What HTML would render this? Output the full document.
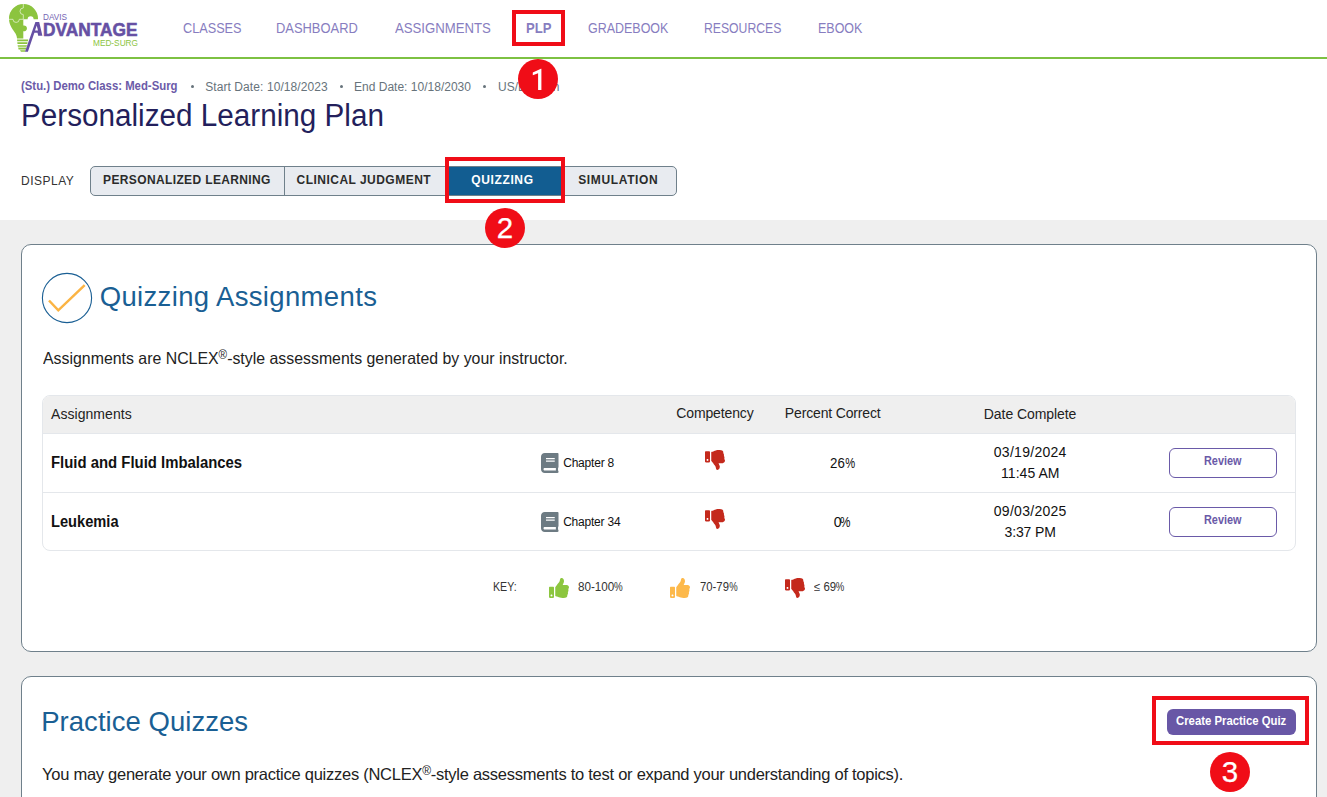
<!DOCTYPE html>
<html><head><meta charset="utf-8">
<style>
*{margin:0;padding:0;box-sizing:border-box}
html,body{width:1327px;height:797px;overflow:hidden;background:#fff;font-family:"Liberation Sans",sans-serif}
.a{position:absolute;white-space:nowrap}
.t{position:absolute;white-space:nowrap;line-height:1}
.redbox{position:absolute;border:4px solid #f00d17}
.badge{position:absolute;width:40px;height:40px;border-radius:50%;background:#f00d17;color:#fff;font-size:29.5px;line-height:40px;text-align:center;-webkit-text-stroke:0.25px #fff}
.card{position:absolute;left:21px;width:1296px;background:#fff;border:1px solid #6f808b;border-radius:10px}
sup{font-size:12px;line-height:0;vertical-align:5px}
.pc{font-style:normal;display:inline-block;transform:scaleX(0.84);transform-origin:0 0}
</style></head><body>
<div class="a" style="left:0;top:0;width:1327px;height:59px;background:#fff;border-bottom:2px solid #7dc142"></div>
<svg class="a" style="left:0;top:0" width="150" height="56" viewBox="0 0 150 56">
<g fill="#8cc43f">
<path d="M23.3,4 A14.5,14.5 0 0 0 9,18.5 C9,26 13.5,30 15.5,33.5 C16.6,35.5 17,37 17,38.6 L23.3,38.6 L23.3,31.2 A2.9,2.9 0 1 0 23.3,25.6 L23.3,19.3 L27.6,19.3 A3,3 0 1 1 33.6,19.3 L37.9,19.3 C38,18.9 38,18.7 38,18.5 A14.5,14.5 0 0 0 23.3,4 Z"/>
<path d="M17,39.5 L28.2,39.5 L27.9,41.2 L17.2,41.2 Z"/>
<path d="M17.3,42.2 L27.6,42.2 L27.3,43.9 L17.5,43.9 Z"/>
<path d="M17.6,44.9 L27,44.9 L26.4,47.2 L18,47.2 Z" fill="#a9d46e"/>
<path d="M18.2,47.8 L26.2,47.8 L25.8,49.5 L18.6,49.5 Z"/>
<path d="M20,50.2 L25.6,50.2 L25.2,51.8 L21,51.8 Z"/>
</g>
<g fill="none" stroke="#fff" stroke-width="0.7" opacity="0.85">
<path d="M23.3,4 L23.3,8 A3.3,3.3 0 0 0 23.3,14.6 L23.3,19.3"/>
<path d="M9,19.3 L13,19.3 A3.1,3.1 0 0 0 19.3,19.3 L23.3,19.3"/>
</g>
<path fill="#6650a4" d="M35.4,22 L39.2,22 L42.4,35.7 L38.2,35.7 L37.5,32.8 L34.4,32.8 L27.9,51.8 L25,51.8 Z"/>
<path fill="#fff" d="M36.7,25.4 L38,30.6 L35,30.6 Z"/>
<text x="43" y="35.7" font-family="Liberation Sans" font-weight="bold" font-size="19.2" fill="#6650a4" stroke="#6650a4" stroke-width="0.6" textLength="94.5" lengthAdjust="spacingAndGlyphs">DVANTAGE</text>
<text x="43" y="19.9" font-family="Liberation Sans" font-size="9.5" fill="#7565b3" textLength="24" lengthAdjust="spacingAndGlyphs">DAVIS</text>
<text x="93" y="46.1" font-family="Liberation Sans" font-size="9.8" fill="#8cc43f" textLength="45" lengthAdjust="spacingAndGlyphs">MED-SURG</text>
</svg>

<div class="a" style="left:190.5px;top:84.5px;width:3px;height:3px;border-radius:50%;background:#67737b"></div>
<div class="a" style="left:339.5px;top:84.5px;width:3px;height:3px;border-radius:50%;background:#67737b"></div>
<div class="a" style="left:483px;top:84.5px;width:3px;height:3px;border-radius:50%;background:#67737b"></div>
<div class="a" style="left:0;top:220px;width:1327px;height:577px;background:#efefef"></div>
<div class="a" style="left:90px;top:166px;width:587px;height:30px;border:1px solid #6f808b;border-radius:5px;background:#e8ebf0;overflow:hidden"><div class="a" style="left:193px;top:0;width:1px;height:28px;background:#6f808b"></div><div class="a" style="left:354px;top:0;width:119px;height:28px;background:#125d91"></div></div>
<div class="card" style="top:244px;height:408px"></div>
<div class="card" style="top:676px;height:200px"></div>
<svg class="a" style="left:41px;top:272px" width="52" height="52" viewBox="0 0 52 52"><circle cx="26" cy="26" r="24.6" fill="none" stroke="#1a5f94" stroke-width="1.1"/><polyline points="8,28.5 17.3,38.3 43.7,13.2" fill="none" stroke="#fbb444" stroke-width="2.5"/></svg>
<div class="a" style="left:42px;top:395px;width:1254px;height:156px;border:1px solid #e4e7eb;border-radius:8px;overflow:hidden"><div class="a" style="left:0;top:0;width:100%;height:38px;background:#efefef;border-bottom:1px solid #e4e7eb"></div><div class="a" style="left:0;top:96px;width:100%;height:1px;background:#e4e7eb"></div></div>
<svg class="a" style="left:541px;top:453px" width="17.5" height="20" viewBox="0 0 448 512" fill="#6d7b83"><path d="M448 360V24c0-13.3-10.7-24-24-24H96C43 0 0 43 0 96v320c0 53 43 96 96 96h328c13.3 0 24-10.7 24-24v-16c0-7.5-3.5-14.3-8.9-18.7-4.2-15.4-4.2-59.3 0-74.7 5.4-4.3 8.9-11.1 8.9-18.6zM128 134c0-3.3 2.7-6 6-6h212c3.3 0 6 2.7 6 6v20c0 3.3-2.7 6-6 6H134c-3.3 0-6-2.7-6-6v-20zm0 64c0-3.3 2.7-6 6-6h212c3.3 0 6 2.7 6 6v20c0 3.3-2.7 6-6 6H134c-3.3 0-6-2.7-6-6v-20zm253.4 250H96c-17.7 0-32-14.3-32-32 0-17.6 14.4-32 32-32h285.4c-1.9 17.1-1.9 46.9 0 64z"/></svg>
<svg class="a" style="left:705px;top:450px" width="20" height="20" viewBox="0 0 512 512" fill="#c4291c"><path d="M0 56v240c0 13.255 10.745 24 24 24h80c13.255 0 24-10.745 24-24V56c0-13.255-10.745-24-24-24H24C10.745 32 0 42.745 0 56zm40 200c0-13.255 10.745-24 24-24s24 10.745 24 24-10.745 24-24 24-24-10.745-24-24zm272 256c-20.183 0-29.485-39.293-33.931-57.795-5.206-21.666-10.589-44.07-25.393-58.902-32.469-32.524-49.503-73.967-89.117-113.111a11.98 11.98 0 0 1-3.558-8.521V59.901c0-6.541 5.243-11.878 11.783-11.998 15.831-.29 36.694-9.079 52.651-16.178C256.189 17.598 295.709.017 343.995 0h2.844c42.777 0 93.363.413 113.774 29.737 8.392 12.057 10.446 27.034 6.148 44.632 16.312 17.053 25.063 48.863 16.382 74.757 17.544 23.432 19.143 56.132 9.308 79.469l.11.11c11.893 11.949 19.523 31.259 19.439 49.197-.156 30.352-26.157 58.098-59.553 58.098H346.38c7.451 28.88 33.617 53.134 33.617 93.446C380 494.554 336 512 312 512z"/></svg>
<div class="a" style="left:1169px;top:448px;width:108px;height:30px;border:1.5px solid #6a5aa8;border-radius:6px;background:#fff"></div>
<svg class="a" style="left:541px;top:512px" width="17.5" height="20" viewBox="0 0 448 512" fill="#6d7b83"><path d="M448 360V24c0-13.3-10.7-24-24-24H96C43 0 0 43 0 96v320c0 53 43 96 96 96h328c13.3 0 24-10.7 24-24v-16c0-7.5-3.5-14.3-8.9-18.7-4.2-15.4-4.2-59.3 0-74.7 5.4-4.3 8.9-11.1 8.9-18.6zM128 134c0-3.3 2.7-6 6-6h212c3.3 0 6 2.7 6 6v20c0 3.3-2.7 6-6 6H134c-3.3 0-6-2.7-6-6v-20zm0 64c0-3.3 2.7-6 6-6h212c3.3 0 6 2.7 6 6v20c0 3.3-2.7 6-6 6H134c-3.3 0-6-2.7-6-6v-20zm253.4 250H96c-17.7 0-32-14.3-32-32 0-17.6 14.4-32 32-32h285.4c-1.9 17.1-1.9 46.9 0 64z"/></svg>
<svg class="a" style="left:705px;top:509px" width="20" height="20" viewBox="0 0 512 512" fill="#c4291c"><path d="M0 56v240c0 13.255 10.745 24 24 24h80c13.255 0 24-10.745 24-24V56c0-13.255-10.745-24-24-24H24C10.745 32 0 42.745 0 56zm40 200c0-13.255 10.745-24 24-24s24 10.745 24 24-10.745 24-24 24-24-10.745-24-24zm272 256c-20.183 0-29.485-39.293-33.931-57.795-5.206-21.666-10.589-44.07-25.393-58.902-32.469-32.524-49.503-73.967-89.117-113.111a11.98 11.98 0 0 1-3.558-8.521V59.901c0-6.541 5.243-11.878 11.783-11.998 15.831-.29 36.694-9.079 52.651-16.178C256.189 17.598 295.709.017 343.995 0h2.844c42.777 0 93.363.413 113.774 29.737 8.392 12.057 10.446 27.034 6.148 44.632 16.312 17.053 25.063 48.863 16.382 74.757 17.544 23.432 19.143 56.132 9.308 79.469l.11.11c11.893 11.949 19.523 31.259 19.439 49.197-.156 30.352-26.157 58.098-59.553 58.098H346.38c7.451 28.88 33.617 53.134 33.617 93.446C380 494.554 336 512 312 512z"/></svg>
<div class="a" style="left:1169px;top:507px;width:108px;height:30px;border:1.5px solid #6a5aa8;border-radius:6px;background:#fff"></div>
<svg class="a" style="left:549px;top:578px" width="20" height="20" viewBox="0 0 512 512" fill="#8cc63f"><path d="M104 224H24c-13.255 0-24 10.745-24 24v240c0 13.255 10.745 24 24 24h80c13.255 0 24-10.745 24-24V248c0-13.255-10.745-24-24-24zM64 472c-13.255 0-24-10.745-24-24s10.745-24 24-24 24 10.745 24 24-10.745 24-24 24zM384 81.452c0 42.416-25.970 66.208-33.277 94.548h101.723c33.397 0 59.397 27.746 59.553 58.098.084 17.938-7.546 37.249-19.439 49.197l-.11.11c9.836 23.337 8.237 56.037-9.308 79.469 8.681 25.895-.069 57.704-16.382 74.757 4.298 17.598 2.244 32.575-6.148 44.632C440.202 511.587 389.616 512 346.839 512l-2.845-.001c-48.287-.017-87.806-17.598-119.560-31.725-15.957-7.099-36.821-15.887-52.651-16.178-6.540-.12-11.783-5.457-11.783-11.998v-213.770c0-3.200 1.282-6.271 3.558-8.521 39.614-39.144 56.648-80.587 89.117-113.111 14.804-14.832 20.188-37.236 25.393-58.902C282.515 39.293 291.817 0 312 0c24 0 72 8 72 81.452z"/></svg>
<svg class="a" style="left:670px;top:578px" width="20" height="20" viewBox="0 0 512 512" fill="#fdb94b"><path d="M104 224H24c-13.255 0-24 10.745-24 24v240c0 13.255 10.745 24 24 24h80c13.255 0 24-10.745 24-24V248c0-13.255-10.745-24-24-24zM64 472c-13.255 0-24-10.745-24-24s10.745-24 24-24 24 10.745 24 24-10.745 24-24 24zM384 81.452c0 42.416-25.970 66.208-33.277 94.548h101.723c33.397 0 59.397 27.746 59.553 58.098.084 17.938-7.546 37.249-19.439 49.197l-.11.11c9.836 23.337 8.237 56.037-9.308 79.469 8.681 25.895-.069 57.704-16.382 74.757 4.298 17.598 2.244 32.575-6.148 44.632C440.202 511.587 389.616 512 346.839 512l-2.845-.001c-48.287-.017-87.806-17.598-119.560-31.725-15.957-7.099-36.821-15.887-52.651-16.178-6.540-.12-11.783-5.457-11.783-11.998v-213.770c0-3.200 1.282-6.271 3.558-8.521 39.614-39.144 56.648-80.587 89.117-113.111 14.804-14.832 20.188-37.236 25.393-58.902C282.515 39.293 291.817 0 312 0c24 0 72 8 72 81.452z"/></svg>
<svg class="a" style="left:785px;top:578px" width="20" height="20" viewBox="0 0 512 512" fill="#c4291c"><path d="M0 56v240c0 13.255 10.745 24 24 24h80c13.255 0 24-10.745 24-24V56c0-13.255-10.745-24-24-24H24C10.745 32 0 42.745 0 56zm40 200c0-13.255 10.745-24 24-24s24 10.745 24 24-10.745 24-24 24-24-10.745-24-24zm272 256c-20.183 0-29.485-39.293-33.931-57.795-5.206-21.666-10.589-44.07-25.393-58.902-32.469-32.524-49.503-73.967-89.117-113.111a11.98 11.98 0 0 1-3.558-8.521V59.901c0-6.541 5.243-11.878 11.783-11.998 15.831-.29 36.694-9.079 52.651-16.178C256.189 17.598 295.709.017 343.995 0h2.844c42.777 0 93.363.413 113.774 29.737 8.392 12.057 10.446 27.034 6.148 44.632 16.312 17.053 25.063 48.863 16.382 74.757 17.544 23.432 19.143 56.132 9.308 79.469l.11.11c11.893 11.949 19.523 31.259 19.439 49.197-.156 30.352-26.157 58.098-59.553 58.098H346.38c7.451 28.88 33.617 53.134 33.617 93.446C380 494.554 336 512 312 512z"/></svg>
<div class="a" style="left:1167px;top:709px;width:129px;height:26px;border-radius:6px;background:#6857a6"></div>
<div class="t" id="n1" style="left:182.96px;top:21.00px;font-size:14px;color:#877dc0;transform:scaleX(0.9060);transform-origin:0 0">CLASSES</div>
<div class="t" id="n2" style="left:276.36px;top:21.00px;font-size:14px;color:#877dc0;transform:scaleX(0.9223);transform-origin:0 0">DASHBOARD</div>
<div class="t" id="n3" style="left:394.96px;top:21.00px;font-size:14px;color:#877dc0;transform:scaleX(0.9411);transform-origin:0 0">ASSIGNMENTS</div>
<div class="t" id="n4" style="left:525.68px;top:21.00px;font-size:14px;color:#877dc0;font-weight:700;transform:scaleX(0.9347);transform-origin:0 0">PLP</div>
<div class="t" id="n5" style="left:588.48px;top:21.00px;font-size:14px;color:#877dc0;transform:scaleX(0.8901);transform-origin:0 0">GRADEBOOK</div>
<div class="t" id="n6" style="left:704.20px;top:21.00px;font-size:14px;color:#877dc0;transform:scaleX(0.8724);transform-origin:0 0">RESOURCES</div>
<div class="t" id="n7" style="left:818.04px;top:21.00px;font-size:14px;color:#877dc0;transform:scaleX(0.8909);transform-origin:0 0">EBOOK</div>
<div class="t" id="s1" style="left:20.68px;top:80.00px;font-size:12px;color:#6b5aa8;font-weight:700;transform:scaleX(0.9467);transform-origin:0 0">(Stu.) Demo Class: Med-Surg</div>
<div class="t" id="s3" style="left:205.16px;top:81.00px;font-size:12px;color:#67737b;letter-spacing:0.086px">Start Date: 10/18/2023</div>
<div class="t" id="s5" style="left:354.00px;top:81.00px;font-size:12px;color:#67737b;letter-spacing:0.010px">End Date: 10/18/2030</div>
<div class="t" id="s7" style="left:498.00px;top:81.00px;font-size:12px;color:#67737b">US/Eastern</div>
<div class="t" id="ti" style="left:20.68px;top:100.00px;font-size:31px;color:#231f5c;transform:scaleX(0.9571);transform-origin:0 0">Personalized Learning Plan</div>
<div class="t" id="dp" style="left:21.00px;top:175.00px;font-size:12px;color:#333;letter-spacing:0.490px">DISPLAY</div>
<div class="t" id="tb1" style="left:103.08px;top:174.00px;font-size:12px;color:#2b2b2b;font-weight:700;letter-spacing:0.367px">PERSONALIZED LEARNING</div>
<div class="t" id="tb2" style="left:296.52px;top:174.00px;font-size:12px;color:#2b2b2b;font-weight:700;letter-spacing:0.478px">CLINICAL JUDGMENT</div>
<div class="t" id="tb3" style="left:471.20px;top:174.00px;font-size:12px;color:#fff;font-weight:700;letter-spacing:0.640px">QUIZZING</div>
<div class="t" id="tb4" style="left:578.20px;top:174.00px;font-size:12px;color:#2b2b2b;font-weight:700;letter-spacing:0.640px">SIMULATION</div>
<div class="t" id="qa" style="left:99.68px;top:283.00px;font-size:27.5px;color:#1a5f94;letter-spacing:0.351px">Quizzing Assignments</div>
<div class="t" id="d1" style="left:42.64px;top:350.00px;font-size:16.5px;color:#222;transform:scaleX(0.9623);transform-origin:0 0">Assignments are NCLEX<sup>&reg;</sup>-style assessments generated by your instructor.</div>
<div class="t" id="h1" style="left:51.00px;top:407.00px;font-size:14px;color:#222;letter-spacing:0.054px">Assignments</div>
<div class="t" id="h2" style="left:676.32px;top:406.00px;font-size:14px;color:#222;letter-spacing:-0.140px">Competency</div>
<div class="t" id="h3" style="left:784.84px;top:406.00px;font-size:14px;color:#222;letter-spacing:-0.155px">Percent Correct</div>
<div class="t" id="h4" style="left:983.84px;top:407.00px;font-size:14px;color:#222;letter-spacing:-0.072px">Date Complete</div>
<div class="t" id="r1" style="left:51.00px;top:455.00px;font-size:16px;color:#111;font-weight:700;transform:scaleX(0.9307);transform-origin:0 0">Fluid and Fluid Imbalances</div>
<div class="t" id="r2" style="left:51.00px;top:514.00px;font-size:16px;color:#111;font-weight:700;transform:scaleX(0.9154);transform-origin:0 0">Leukemia</div>
<div class="t" id="c1" style="left:563.16px;top:457.00px;font-size:12px;color:#111;letter-spacing:-0.195px">Chapter 8</div>
<div class="t" id="c2" style="left:563.16px;top:516.00px;font-size:12px;color:#111;letter-spacing:-0.220px">Chapter 34</div>
<div class="t" id="p1" style="left:829.64px;top:456.00px;font-size:14px;color:#111;transform:scaleX(0.9473);transform-origin:0 0">26<i class="pc">%</i></div>
<div class="t" id="p2" style="left:833.80px;top:515.00px;font-size:14px;color:#111;letter-spacing:-1.800px">0<i class="pc">%</i></div>
<div class="t" id="dA1" style="left:993.80px;top:445.00px;font-size:14px;color:#111;letter-spacing:0.280px">03/19/2024</div>
<div class="t" id="dA2" style="left:1001.00px;top:466.00px;font-size:14px;color:#111;letter-spacing:0.054px">11:45 AM</div>
<div class="t" id="dB1" style="left:993.80px;top:504.00px;font-size:14px;color:#111;letter-spacing:0.280px">09/03/2025</div>
<div class="t" id="dB2" style="left:1004.48px;top:525.00px;font-size:14px;color:#111;letter-spacing:-0.120px">3:37 PM</div>
<div class="t" id="rv1" style="left:1204.32px;top:455.00px;font-size:12px;color:#6a5aa8;font-weight:700;transform:scaleX(0.9068);transform-origin:0 0">Review</div>
<div class="t" id="rv2" style="left:1204.32px;top:514.00px;font-size:12px;color:#6a5aa8;font-weight:700;transform:scaleX(0.9068);transform-origin:0 0">Review</div>
<div class="t" id="k1" style="left:492.96px;top:581.00px;font-size:12px;color:#333;transform:scaleX(0.8866);transform-origin:0 0">KEY:</div>
<div class="t" id="k2" style="left:577.64px;top:581.00px;font-size:12px;color:#333;transform:scaleX(0.9716);transform-origin:0 0">80-100<i class="pc">%</i></div>
<div class="t" id="k3" style="left:699.64px;top:581.00px;font-size:12px;color:#333;transform:scaleX(0.9424);transform-origin:0 0">70-79<i class="pc">%</i></div>
<div class="t" id="k4" style="left:813.64px;top:581.00px;font-size:12px;color:#333;transform:scaleX(0.9482);transform-origin:0 0">&le; 69<i class="pc">%</i></div>
<div class="t" id="pq" style="left:41.20px;top:708.00px;font-size:27.5px;color:#1a5f94;letter-spacing:0.036px">Practice Quizzes</div>
<div class="t" id="d2" style="left:42.00px;top:766.00px;font-size:16.5px;color:#222;letter-spacing:-0.259px">You may generate your own practice quizzes (NCLEX<sup>&reg;</sup>-style assessments to test or expand your understanding of topics).</div>
<div class="t" id="cq" style="left:1175.88px;top:715.00px;font-size:12px;color:#fff;font-weight:700;transform:scaleX(0.9448);transform-origin:0 0">Create Practice Quiz</div>
<div class="redbox" style="left:512px;top:10px;width:53px;height:36px"></div>
<div class="badge" style="left:518px;top:59px"><svg class="a" style="left:0;top:0" width="40" height="40" viewBox="0 0 40 40"><path fill="#fff" d="M23.4,9.8 L23.4,30.9 L20.1,30.9 L20.1,14.2 L14.8,16.2 L14.8,13.4 L22.9,9.8 Z"/></svg></div>
<div class="redbox" style="left:445px;top:157px;width:120px;height:46px"></div>
<div class="badge" style="left:485px;top:208px">2</div>
<div class="redbox" style="left:1152px;top:696px;width:157px;height:49px"></div>
<div class="badge" style="left:1210px;top:752px">3</div>
</body></html>
